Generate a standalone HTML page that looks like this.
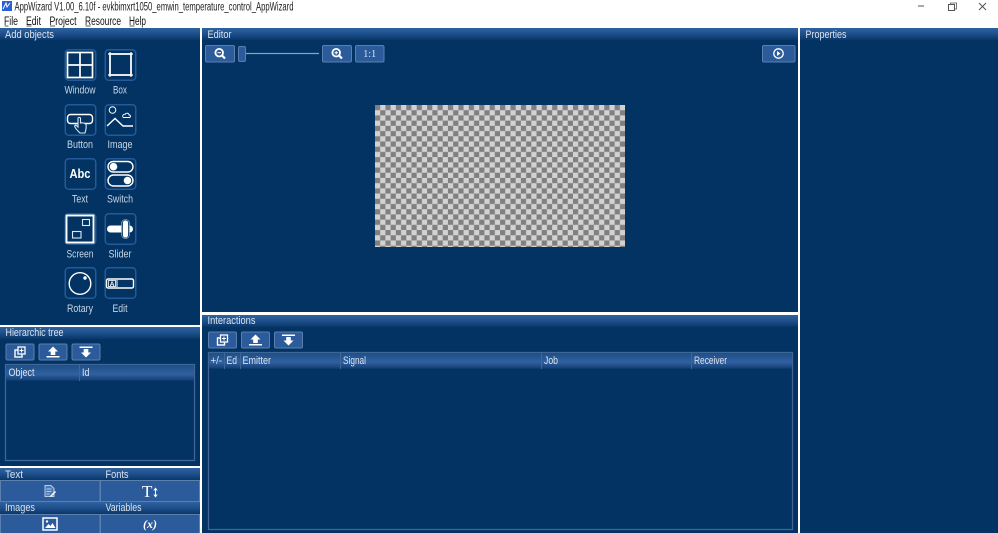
<!DOCTYPE html>
<html><head><meta charset="utf-8"><title>AppWizard</title>
<style>
html,body{margin:0;padding:0;background:#fff;width:998px;height:533px;overflow:hidden}
svg{display:block;filter:blur(.35px)}
text{font-family:"Liberation Sans",sans-serif;font-size:11px;fill:#c9d6e6}
.k{fill:#111;font-size:11.5px}
.h{fill:#dbe4ef}
.i{fill:none;stroke:#fff;stroke-width:1.7}
.t{fill:none;stroke:#fff;stroke-width:1.4}
.f{fill:#fff}
</style></head><body>
<svg width="998" height="533" viewBox="0 0 998 533" xmlns="http://www.w3.org/2000/svg">
<defs>
<linearGradient id="hd" x1="0" y1="0" x2="0" y2="1"><stop offset="0" stop-color="#2f62a0"/><stop offset=".5" stop-color="#1d4f8b"/><stop offset="1" stop-color="#0a3768"/></linearGradient>
<linearGradient id="th" x1="0" y1="0" x2="0" y2="1"><stop offset="0" stop-color="#1f4f88"/><stop offset=".6" stop-color="#30609f"/><stop offset="1" stop-color="#143f74"/></linearGradient>
<pattern id="ch" x="375" y="105" width="10.42" height="10.42" patternUnits="userSpaceOnUse"><rect width="10.42" height="10.42" fill="#d2d2d2"/><rect width="5.21" height="5.21" fill="#808080"/><rect x="5.21" y="5.21" width="5.21" height="5.21" fill="#808080"/></pattern>
<g id="btn"><rect x=".5" y=".5" width="28" height="16" rx="1.5" fill="#2c5b9b" stroke="#5b7fae"/></g>
<g id="tile"><rect x=".75" y=".75" width="30.5" height="30.5" rx="3.5" fill="#023362" stroke="#235a97" stroke-width="1.5"/></g>
<g id="copy"><rect x="-5" y="-2" width="7" height="7" class="t"/><rect x="-2" y="-5" width="7" height="7" fill="#2c5b9b" stroke="#fff" stroke-width="1.3"/><path d="M1.5-3.500v4M-.5-1.500h4" stroke="#fff"/></g>
<g id="up"><path d="M0-5.500l5 5H2.300V3H-2.300V-.5H-5z" class="f"/><rect x="-6.500" y="4" width="13" height="1.500" class="f"/></g>
<g id="down"><path d="M0 5.500l5-5H2.300V-3H-2.300V.5H-5z" class="f"/><rect x="-6.500" y="-5.500" width="13" height="1.500" class="f"/></g>
<g id="zoom"><circle cx="-.8" cy="-.8" r="3.800" fill="none" stroke="#fff" stroke-width="1.800"/><path d="M2 2l3 3" stroke="#fff" stroke-width="2.200"/></g>
</defs>

<rect width="998" height="533" fill="#fff"/>
<!-- title bar -->
<rect x="2" y="1" width="10" height="10" fill="#2a5fd8"/><path d="M3 9l3-6 1 4 3-4" stroke="#fff" fill="none" stroke-width="1"/>
<text class="k" x="14.500" y="10.500" textLength="279" lengthAdjust="spacingAndGlyphs" style="fill:#222">AppWizard V1.00_6.10f - evkbimxrt1050_emwin_temperature_control_AppWizard</text>
<path d="M918 6h6" stroke="#555"/>
<rect x="948.500" y="4.500" width="6" height="6" fill="none" stroke="#555"/><path d="M950.500 4.500v-1.500h6v6h-2" fill="none" stroke="#555" stroke-width=".8"/>
<path d="M979 3l7 7M986 3l-7 7" stroke="#555"/>
<!-- menu -->
<text class="k" x="4" y="25" textLength="14" lengthAdjust="spacingAndGlyphs">File</text><path d="M4.500 26h4" stroke="#111" stroke-width=".7"/>
<text class="k" x="26" y="25" textLength="15" lengthAdjust="spacingAndGlyphs">Edit</text><path d="M26.500 26h5" stroke="#111" stroke-width=".7"/>
<text class="k" x="49.500" y="25" textLength="27" lengthAdjust="spacingAndGlyphs">Project</text><path d="M50 26h5" stroke="#111" stroke-width=".7"/>
<text class="k" x="85" y="25" textLength="36" lengthAdjust="spacingAndGlyphs">Resource</text><path d="M85.500 26h5" stroke="#111" stroke-width=".7"/>
<text class="k" x="129" y="25" textLength="17" lengthAdjust="spacingAndGlyphs">Help</text><path d="M129.500 26h5" stroke="#111" stroke-width=".7"/>

<!-- panels -->
<rect x="0" y="28" width="200" height="297" fill="#023362"/>
<rect x="0" y="327" width="200" height="139" fill="#023362"/>
<rect x="0" y="468" width="200" height="65" fill="#023362"/>
<rect x="202" y="28" width="596" height="284" fill="#023362"/>
<rect x="202" y="315" width="596" height="218" fill="#023362"/>
<rect x="800" y="28" width="198" height="505" fill="#023362"/>

<!-- headers -->
<rect x="0" y="28" width="200" height="12" fill="url(#hd)"/>
<rect x="202" y="28" width="596" height="12" fill="url(#hd)"/>
<rect x="800" y="28" width="198" height="12" fill="url(#hd)"/>
<rect x="0" y="327" width="200" height="12" fill="url(#hd)"/>
<rect x="202" y="315" width="596" height="12" fill="url(#hd)"/>
<rect x="0" y="468" width="200" height="12" fill="url(#hd)"/>
<rect x="0" y="502" width="200" height="12" fill="url(#hd)"/>
<text class="h" x="5" y="38" textLength="49" lengthAdjust="spacingAndGlyphs">Add objects</text>
<text class="h" x="207.500" y="38" textLength="24" lengthAdjust="spacingAndGlyphs">Editor</text>
<text class="h" x="805.500" y="38" textLength="41" lengthAdjust="spacingAndGlyphs">Properties</text>
<text class="h" x="5.500" y="336" textLength="58" lengthAdjust="spacingAndGlyphs">Hierarchic tree</text>
<text class="h" x="207.500" y="324" textLength="48" lengthAdjust="spacingAndGlyphs">Interactions</text>
<text class="h" x="5" y="478" textLength="18" lengthAdjust="spacingAndGlyphs">Text</text>
<text class="h" x="105.500" y="478" textLength="23" lengthAdjust="spacingAndGlyphs">Fonts</text>
<text class="h" x="5" y="511" textLength="30" lengthAdjust="spacingAndGlyphs">Images</text>
<text class="h" x="105.500" y="511" textLength="36" lengthAdjust="spacingAndGlyphs">Variables</text>

<!-- tiles -->
<use href="#tile" x="64.500" y="49"/><use href="#tile" x="104.500" y="49"/>
<use href="#tile" x="64.500" y="104"/><use href="#tile" x="104.500" y="104"/>
<use href="#tile" x="64.500" y="158"/><use href="#tile" x="104.500" y="158"/>
<use href="#tile" x="64.500" y="213"/><use href="#tile" x="104.500" y="213"/>
<use href="#tile" x="64.500" y="267"/><use href="#tile" x="104.500" y="267"/>
<!-- window -->
<rect x="67.500" y="52.500" width="25" height="25" class="i"/><path d="M80 52.500v25M67.500 65h25" class="i"/>
<!-- box -->
<rect x="110" y="54" width="21" height="21" class="i"/><path d="M108 54h25M108 75h25M110 52v25M131 52v25" stroke="#fff" stroke-width="1.200"/>
<!-- button -->
<rect x="67.500" y="114.500" width="25" height="9" rx="3" class="t"/>
<path d="M80 133c-2-2-4.500-4-5.500-7l1.200-1 2.300 2v-8.500c0-1.500 2.500-1.500 2.500 0v4.500c1.500-.5 4.500 0 5.500 1.500.5 2.500 0 5.500-1 8.500z" fill="#023362" stroke="#dfe7f0" stroke-width="1.100"/>
<!-- image -->
<circle cx="112.500" cy="110" r="3.300" fill="none" stroke="#fff" stroke-width="1"/>
<path d="M107 126l8-7.500 8 7.500h10" class="t"/>
<path d="M123 117c-1-2 1-3 2-2.500 1-2 4-1.500 4 .5 2 0 2 2.500 0 2.500h-5c-.5 0-1 0-1-.5z" fill="none" stroke="#fff" stroke-width=".9"/>
<!-- text -->
<text x="80" y="178" text-anchor="middle" style="font-size:12.500px;font-weight:bold;fill:#fff" textLength="21" lengthAdjust="spacingAndGlyphs">Abc</text>
<!-- switch -->
<rect x="108" y="161.500" width="25" height="10.500" rx="5.200" class="t"/><circle cx="113.500" cy="166.700" r="3.800" class="f"/>
<rect x="108" y="175" width="25" height="11" rx="5.500" class="t"/><circle cx="127.500" cy="180.500" r="3.800" class="f"/>
<!-- screen -->
<rect x="66.500" y="215.500" width="27" height="27" fill="none" stroke="#fff" stroke-width="1.900"/>
<rect x="82.500" y="219.500" width="7" height="6" fill="none" stroke="#dfe7f0" stroke-width="1.100"/>
<rect x="72.500" y="231.500" width="8.500" height="6.500" fill="none" stroke="#dfe7f0" stroke-width="1.100"/>
<!-- slider -->
<rect x="107" y="225.500" width="26" height="7" rx="3.500" class="f"/>
<rect x="122.500" y="220" width="6" height="18" rx="3" fill="#fff" stroke="#023362" stroke-width=".8"/>
<rect x="121.500" y="219.500" width="8" height="19" rx="4" fill="none" stroke="#7f9cc0" stroke-width=".8"/>
<!-- rotary -->
<circle cx="80" cy="283.500" r="10.800" fill="none" stroke="#fff" stroke-width="1.400"/><circle cx="85" cy="278" r="1.700" class="f"/>
<!-- edit -->
<rect x="106.500" y="279" width="27" height="9" rx="1.500" class="t"/><rect x="108.500" y="280.500" width="7" height="6" fill="#023362" stroke="#fff" stroke-width=".8"/>
<text x="109.800" y="286" style="font-size:6.500px;font-weight:bold;fill:#fff">A</text><path d="M117 280v7" stroke="#fff"/>
<!-- tile labels -->
<text x="80" y="93.500" text-anchor="middle" textLength="31" lengthAdjust="spacingAndGlyphs">Window</text>
<text x="120" y="93.500" text-anchor="middle" textLength="14" lengthAdjust="spacingAndGlyphs">Box</text>
<text x="80" y="148" text-anchor="middle" textLength="26" lengthAdjust="spacingAndGlyphs">Button</text>
<text x="120" y="148" text-anchor="middle" textLength="25" lengthAdjust="spacingAndGlyphs">Image</text>
<text x="80" y="202.500" text-anchor="middle" textLength="16" lengthAdjust="spacingAndGlyphs">Text</text>
<text x="120" y="202.500" text-anchor="middle" textLength="26" lengthAdjust="spacingAndGlyphs">Switch</text>
<text x="80" y="257.500" text-anchor="middle" textLength="27" lengthAdjust="spacingAndGlyphs">Screen</text>
<text x="120" y="257.500" text-anchor="middle" textLength="23" lengthAdjust="spacingAndGlyphs">Slider</text>
<text x="80" y="312" text-anchor="middle" textLength="26" lengthAdjust="spacingAndGlyphs">Rotary</text>
<text x="120" y="312" text-anchor="middle" textLength="15" lengthAdjust="spacingAndGlyphs">Edit</text>

<!-- hierarchic buttons -->
<use href="#btn" x="5.500" y="343.500"/><use href="#btn" x="38.500" y="343.500"/><use href="#btn" x="71.500" y="343.500"/>
<use href="#copy" x="20" y="352"/><use href="#up" x="53" y="352"/><use href="#down" x="86" y="352"/>
<!-- hierarchic table -->
<rect x="5.500" y="364.500" width="189" height="96" fill="none" stroke="#3f6795" stroke-width="1.300"/>
<rect x="6" y="365" width="188" height="15.500" fill="url(#th)"/>
<path d="M79.500 365v16" stroke="#3f6795"/>
<text x="8.500" y="376" class="h" textLength="26" lengthAdjust="spacingAndGlyphs">Object</text>
<text x="82" y="376" class="h" textLength="7.500" lengthAdjust="spacingAndGlyphs">Id</text>

<!-- resources buttons -->
<rect x=".5" y="480.500" width="99.500" height="21" fill="#2c5b9b" stroke="#5b7fae"/>
<rect x="100.500" y="480.500" width="99" height="21" fill="#2c5b9b" stroke="#5b7fae"/>
<rect x=".5" y="514.500" width="99.500" height="19" fill="#2c5b9b" stroke="#5b7fae"/>
<rect x="100.500" y="514.500" width="99" height="19" fill="#2c5b9b" stroke="#5b7fae"/>
<path d="M45 485.500h6l3 3v8h-9z" fill="#4f79b0" stroke="#b9cbe2"/><path d="M46.500 489h5M46.500 491.500h5M46.500 494h3" stroke="#dbe5f1" stroke-width=".8"/><path d="M50.500 496.500l5-5" stroke="#fff" stroke-width="1.500"/>
<text x="142" y="497" style="font-family:'Liberation Serif',serif;font-size:17px;fill:#fff">T</text>
<path d="M155.500 489v7M153.800 490.500l1.700-2.200 1.700 2.200M153.800 494.500l1.700 2.200 1.700-2.200" stroke="#fff" fill="none"/>
<rect x="43" y="518" width="14" height="12" fill="#2c5b9b" stroke="#fff" stroke-width="1.500"/><path d="M45 528l3.500-4 2 2 2-3 3 5z" class="f"/><circle cx="47" cy="521.500" r="1.200" class="f"/>
<text x="150" y="528" text-anchor="middle" style="font-family:'Liberation Serif',serif;font-size:12px;font-weight:bold;font-style:italic;fill:#fff">(x)</text>

<!-- editor toolbar -->
<rect x="205.500" y="45.500" width="29" height="16.500" rx="1.500" fill="#2c5b9b" stroke="#5b7fae"/><use href="#zoom" x="220" y="53.500"/><path d="M217.500 52.700h3.500" stroke="#fff"/>
<rect x="238.500" y="46.500" width="7" height="15" rx="1.500" fill="#2c5b9b" stroke="#5b7fae"/>
<path d="M246 53.500h73" stroke="#8aa2bf" stroke-width="1.300"/>
<rect x="322.500" y="45.500" width="29" height="16.500" rx="1.500" fill="#2c5b9b" stroke="#5b7fae"/><use href="#zoom" x="337" y="53.500"/><path d="M334.500 52.700h3.500M336.200 51v3.500" stroke="#fff"/>
<rect x="355.500" y="45.500" width="28.500" height="16.500" rx="1.500" fill="#2c5b9b" stroke="#5b7fae"/>
<text x="369.700" y="57" text-anchor="middle" style="font-family:'Liberation Serif',serif;font-size:10px;fill:#dbe5f1">1:1</text>
<rect x="762.500" y="45.500" width="32.500" height="16.500" rx="1.500" fill="#2c5b9b" stroke="#5b7fae"/>
<circle cx="778.500" cy="53.500" r="4.700" fill="none" stroke="#fff" stroke-width="1.300"/><path d="M777 51v5l3.500-2.500z" class="f"/>

<!-- canvas -->
<rect x="375" y="105" width="250" height="142" fill="url(#ch)"/>

<!-- interactions -->
<use href="#btn" x="208" y="331.500"/><use href="#btn" x="241" y="331.500"/><use href="#btn" x="274" y="331.500"/>
<use href="#copy" x="222.500" y="340"/><use href="#up" x="255.500" y="340"/><use href="#down" x="288.500" y="340"/>
<rect x="208.500" y="352.500" width="584" height="177" fill="none" stroke="#3f6795" stroke-width="1.300"/>
<rect x="209" y="353" width="583" height="15.500" fill="url(#th)"/>
<path d="M224.500 353v16M240.500 353v16M340.500 353v16M541.500 353v16M691.500 353v16" stroke="#3f6795"/>
<text x="210.500" y="364" class="h" textLength="11.500" lengthAdjust="spacingAndGlyphs">+/-</text>
<text x="226.500" y="364" class="h" textLength="10.500" lengthAdjust="spacingAndGlyphs">Ed</text>
<text x="242.500" y="364" class="h" textLength="28.500" lengthAdjust="spacingAndGlyphs">Emitter</text>
<text x="343" y="364" class="h" textLength="23" lengthAdjust="spacingAndGlyphs">Signal</text>
<text x="544" y="364" class="h" textLength="14" lengthAdjust="spacingAndGlyphs">Job</text>
<text x="694" y="364" class="h" textLength="33" lengthAdjust="spacingAndGlyphs">Receiver</text>
</svg>
</body></html>
